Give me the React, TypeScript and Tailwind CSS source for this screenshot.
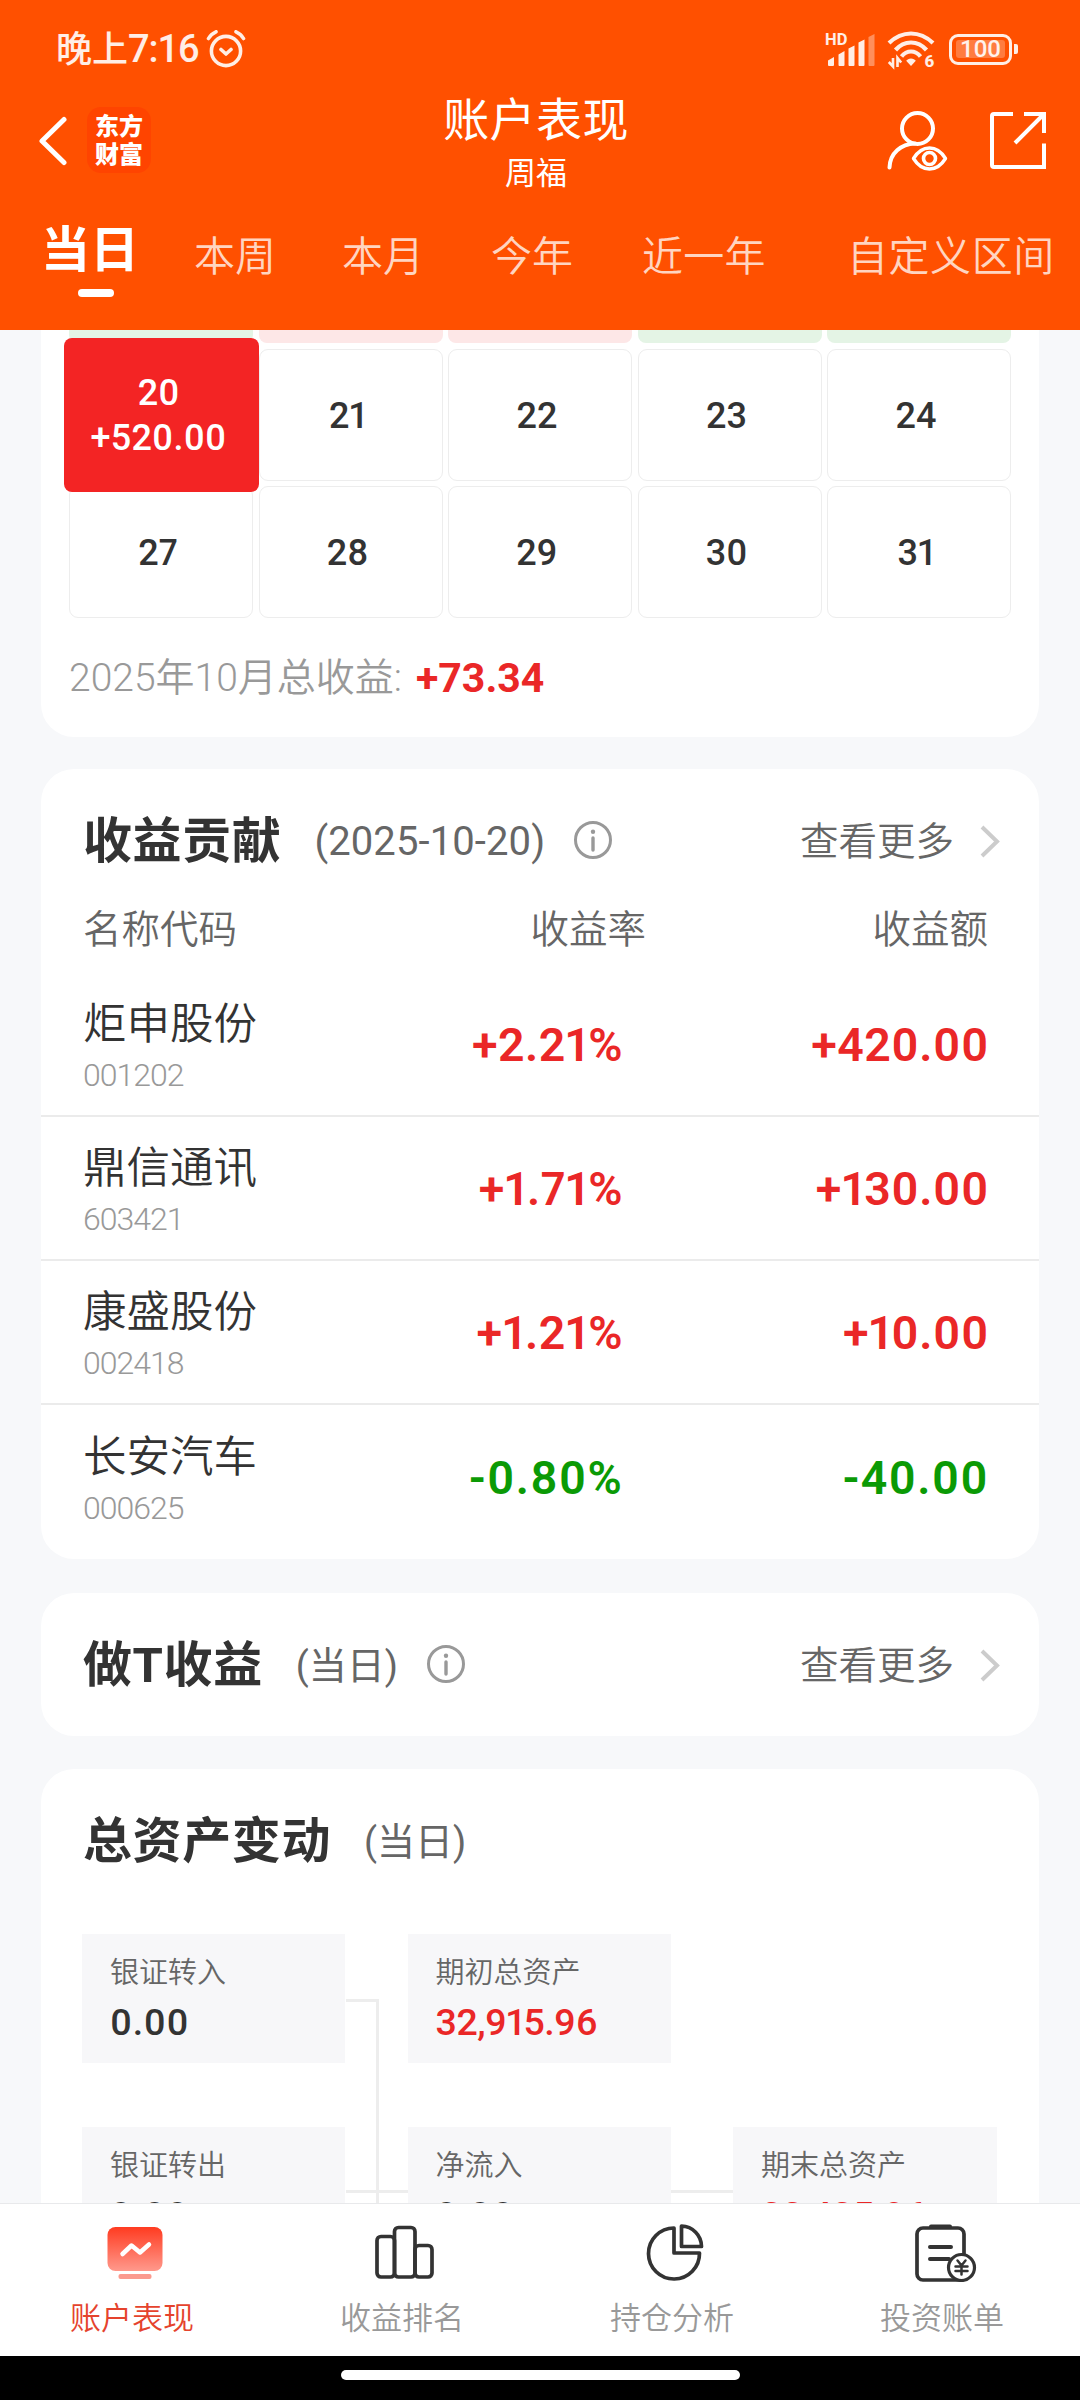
import { ReactNode } from 'react';
import clsx from 'clsx';

interface Holding {
  name: string;
  code: string;
  rate: string;
  amount: string;
}

const tabs = [
  { label: '本周', className: 'ml-[58px]' },
  { label: '本月', className: 'ml-[66px]' },
  { label: '今年', className: 'ml-[67px]' },
  { label: '近一年', className: 'ml-[69px] tracking-[0.3px]' },
  { label: '自定义区间', className: 'ml-[81px] tracking-[0.6px]' },
];

const lastWeek = ['down', 'up', 'up', 'down', 'down'];
const days = [20, 21, 22, 23, 24, 27, 28, 29, 30, 31];

const holdings: Holding[] = [
  { name: '炬申股份', code: '001202', rate: '+2.21%', amount: '+420.00' },
  { name: '鼎信通讯', code: '603421', rate: '+1.71%', amount: '+130.00' },
  { name: '康盛股份', code: '002418', rate: '+1.21%', amount: '+10.00' },
  { name: '长安汽车', code: '000625', rate: '-0.80%', amount: '-40.00' },
];

function StatusBar() {
  return (
    <div className="flex h-[98px] items-center pl-[56px] pr-[62px] text-white/90">
      <span className="text-[36px] font-medium leading-[40px]">
        晚上<span className="text-[38px] tracking-[-1.1px]">7:16</span>
      </span>
      <svg className="ml-[8px] h-[38px] w-[40px]" viewBox="0 1 40 38" fill="none" stroke="currentColor" strokeWidth="3.6" strokeLinecap="round" strokeLinejoin="round">
        <circle cx="20" cy="22" r="14.6" />
        <path d="M2.5 9.5Q5 5 10 2.8M37.5 9.5Q35 5 30 2.8M15 20.5l5 4.5 5-4.5" />
      </svg>
      <div className="ml-auto flex items-center">
        <svg className="h-[36px] w-[52px]" viewBox="0 0 52 36" fill="currentColor">
          <text x="0" y="14" fontSize="16.5" fontWeight="700" fontFamily="Roboto, sans-serif">HD</text>
          <path d="M3 29.5l6-3.5v8a1 1 0 0 1-1 1H4a1 1 0 0 1-1-1zM13.5 23.5l6-3.5v14a1 1 0 0 1-1 1h-4a1 1 0 0 1-1-1zM23.5 17.5l6-3v19.5a1 1 0 0 1-1 1h-4a1 1 0 0 1-1-1zM33.5 11.5l6-3v25.5a1 1 0 0 1-1 1h-4a1 1 0 0 1-1-1z" />
          <path opacity=".4" d="M43.5 6l6-3v31a1 1 0 0 1-1 1h-4a1 1 0 0 1-1-1z" />
        </svg>
        <svg className="ml-[10px] h-[44px] w-[50px]" viewBox="0 -3 50 44" fill="none" stroke="currentColor" strokeWidth="4.2">
          <path d="M2 13Q12 3.5 24 3.5T46 13M8.5 20Q15 12.5 24 12.5T39.5 20M14.5 26.5Q18.5 21.5 24 21.5T33.5 26.5" />
          <path d="M24 28.5c-2 0-4 1-4.8 2.3L24 36l4.8-5.2C28 29.5 26 28.5 24 28.5z" fill="currentColor" stroke="none" />
          <path d="M6 28v8.5L1.8 32M10.5 37v-9l3.7 4.5" strokeWidth="2.6" />
          <text x="37.5" y="37" fontSize="17" fontWeight="800" fill="currentColor" stroke="none" fontFamily="Roboto, sans-serif">6</text>
        </svg>
        <div className="ml-[12px] flex h-[31px] w-[63px] items-center justify-center rounded-[9px] border-[3px] border-current">
          <span className="flex h-[18px] w-[49px] items-center justify-center rounded-[3px] bg-white/25 text-[24px] font-medium leading-none">100</span>
        </div>
        <span className="ml-[2px] h-[10px] w-[4px] rounded-r-[2px] bg-current" />
      </div>
    </div>
  );
}

function TitleBar() {
  return (
    <div className="grid h-[106px] grid-cols-[1fr_auto_1fr] items-start">
      <div className="flex pl-[38px] pt-[9px]">
        <svg className="mt-[9px] h-[50px] w-[30px]" viewBox="0 0 30 50" fill="none" stroke="white" strokeWidth="5" strokeLinecap="round" strokeLinejoin="round">
          <path d="M26 3.5L4 25l22 21.5" />
        </svg>
        <div className="ml-[19px] flex h-[66px] w-[64px] items-center justify-center rounded-[14px] bg-[#ff4400] pt-[2px] text-center text-[24px] font-black leading-[28px] text-white">
          东方
          <br />
          财富
        </div>
      </div>
      <div className="-mt-[2px] pr-[8px] text-center text-white">
        <h1 className="text-[46px] leading-[48px] tracking-[0.4px]">账户表现</h1>
        <p className="mt-[12px] text-[31px] leading-[36px]">周福</p>
      </div>
      <div className="flex items-start justify-end pr-[32px] pt-[12px]">
        <svg className="h-[64px] w-[64px]" viewBox="1 2 64 64" fill="none" stroke="white" strokeWidth="4">
          <circle cx="32.5" cy="20.5" r="15.5" />
          <path d="M4.5 59.5C5 45 16 36 30 35.5" strokeLinecap="round" />
          <path d="M28.5 50.5Q35 40 44.5 40T60.5 50.5Q54 61 44.5 61T28.5 50.5z" strokeWidth="3.4" strokeLinejoin="round" />
          <circle cx="44.5" cy="50.5" r="6" strokeWidth="3.6" />
        </svg>
        <svg className="ml-[38px] h-[60px] w-[60px]" viewBox="0 1 60 60" fill="none" stroke="white" strokeWidth="4">
          <path d="M25 5H6a2 2 0 0 0-2 2v49a2 2 0 0 0 2 2h50V34.5M36 5h20v19M55 6L27 34" />
        </svg>
      </div>
    </div>
  );
}

function PeriodTabs() {
  return (
    <div className="flex h-[126px] items-start pl-[41px] pt-[20px]">
      <div className="flex w-[95px] shrink-0 flex-col items-start whitespace-nowrap">
        <span className="text-[49px] font-bold leading-[54px] text-white">当日</span>
        <span className="ml-[37px] mt-[11px] h-[8px] w-[36px] rounded-full bg-white" />
      </div>
      {tabs.map((t) => (
        <span key={t.label} className={clsx('whitespace-nowrap pt-[6px] text-[41px] font-[350] leading-[54px] text-[#ffd5c1]', t.className)}>
          {t.label}
        </span>
      ))}
    </div>
  );
}

function Calendar() {
  return (
    <section className="h-[407px] shrink-0 rounded-b-[33px] bg-white px-[28px]">
      <div className="grid grid-cols-5 gap-x-[5.5px]">
        {lastWeek.map((d, i) => (
          <div key={i} className={clsx('h-[13px] rounded-b-[8px]', d === 'up' ? 'bg-[#fde7e7]' : 'bg-[#e4f4e5]')} />
        ))}
      </div>
      <div className="mt-[6px] grid grid-cols-5 gap-x-[5.5px] gap-y-[5px]">
        {days.map((d) => (
          <div key={d} className="relative flex h-[132px] items-center justify-center rounded-[9px] border border-[#ededed] pr-[6px] pt-[2px] text-[36px] font-medium text-[#333] proportional-nums">
            {d === 20 ? (
              <div className="absolute -left-[6px] -top-[12px] z-10 flex h-[154px] w-[195px] flex-col items-center justify-center rounded-[8px] bg-[#f32424] pr-[6px] pt-[2px] leading-[45px] text-white">
                <span>20</span>
                <span className="tracking-[0.2px]">+520.00</span>
              </div>
            ) : (
              d
            )}
          </div>
        ))}
      </div>
      <p className="mt-[36px] flex items-center text-[39px] font-[350] leading-[48px] text-[#999]">
        2025年10月总收益:
        <span className="ml-[14px] text-[41px] font-bold text-[#ea2727]">+73.34</span>
      </p>
    </section>
  );
}

function InfoIcon() {
  return (
    <svg className="h-[40px] w-[40px]" viewBox="0 1 40 40" fill="none" stroke="#999" strokeWidth="3">
      <circle cx="20" cy="20" r="17.5" />
      <circle cx="20" cy="11.7" r="2.2" fill="#999" stroke="none" />
      <path d="M20 18v12" strokeLinecap="round" strokeWidth="3.4" />
    </svg>
  );
}

interface CardHeaderProps {
  title: string;
  note: string;
  noteClassName?: string;
  info?: ReactNode;
  more?: boolean;
}

function CardHeader({ title, note, noteClassName = 'text-[38px]', info, more }: CardHeaderProps) {
  return (
    <div className="flex h-[143px] items-center pl-[42px] pr-[38px]">
      <h2 className="pt-[3px] text-[49px] font-bold leading-[60px] tracking-[0.6px] text-[#333]">{title}</h2>
      <span className={clsx('ml-[33px] mr-[28px] pt-[3px] font-[370] leading-[60px] text-[#666]', noteClassName)}>{note}</span>
      {info}
      {more && (
        <div className="ml-auto flex items-center pt-[2px] text-[38.5px] font-[350] leading-[60px] text-[#666]">
          查看更多
          <svg className="-mt-[2px] ml-[25px] h-[34px] w-[22px]" viewBox="0 0 22 34" fill="none" stroke="#ccc" strokeWidth="4">
            <path d="M3 3l15 14.5L3 32" />
          </svg>
        </div>
      )}
    </div>
  );
}

function Contribution() {
  return (
    <section className="h-[790px] rounded-[33px] bg-white">
      <CardHeader title="收益贡献" note="(2025-10-20)" noteClassName="text-[40px] tracking-[0.1px]" info={<InfoIcon />} more />
      <div className="-mt-[7px] flex h-[68px] items-start pl-[42px] pr-[51px] text-[38.5px] font-[350] leading-[50px] text-[#666]">
        <span>名称代码</span>
        <span className="ml-auto">收益率</span>
        <span className="w-[342px] text-right">收益额</span>
      </div>
      {holdings.map((h) => {
        const color = h.amount.startsWith('-') ? 'text-[#0b9a05] tracking-[1.2px]' : 'text-[#ea2727] tracking-[0.5px]';
        return (
          <div key={h.code} className="flex h-[144px] items-center border-b-2 border-[#ebebeb] pl-[42px] pr-[50px] last:border-0">
            <div className="mt-[10px] w-[240px]">
              <div className="text-[43.5px] font-[350] leading-[52px] text-[#333]">{h.name}</div>
              <div className="text-[32px] font-[350] leading-[48px] tracking-[-1px] text-[#999]">{h.code}</div>
            </div>
            <div className={clsx('w-[300px] pt-[3px] text-right text-[46.5px] font-semibold proportional-nums', color)}>{h.rate}</div>
            <div className={clsx('ml-auto pt-[3px] text-[46.5px] font-semibold proportional-nums', color)}>{h.amount}</div>
          </div>
        );
      })}
    </section>
  );
}

function AssetBox({ label, value, red }: { label: string; value: string; red?: boolean }) {
  return (
    <div className="h-[129px] bg-[#f7f7f9] pl-[28px] pt-[17px]">
      <div className="text-[29px] font-[350] leading-[44px] text-[#666]">{label}</div>
      <div className={clsx('mt-[3px] text-[37.5px] font-medium leading-[48px] proportional-nums', red ? 'tracking-[-0.4px] text-[#ea2727]' : 'tracking-[0.7px] text-[#333]')}>{value}</div>
    </div>
  );
}

function AssetChange() {
  return (
    <section className="rounded-t-[33px] bg-white">
      <CardHeader title="总资产变动" note="(当日)" />
      <div className="relative mt-[22px] px-[41px]">
        {/* connector lines between the boxes */}
        <div className="absolute left-[305px] top-[65px] h-[260px] w-[33px] border-r-[3px] border-t-[3px] border-[#ededed]" />
        <div className="absolute left-[305px] top-[256px] h-[3px] w-[400px] bg-[#ededed]" />
        <div className="relative grid grid-cols-[263px_263px_264px] gap-x-[62.5px] gap-y-[64px]">
          <AssetBox label="银证转入" value="0.00" />
          <AssetBox label="期初总资产" value="32,915.96" red />
          <span />
          <AssetBox label="银证转出" value="0.00" />
          <AssetBox label="净流入" value="0.00" />
          <AssetBox label="期末总资产" value="33,435.96" red />
        </div>
      </div>
    </section>
  );
}

function PerformanceIcon() {
  return (
    <svg className="h-[60px] w-[64px]" viewBox="0 0 64 60" fill="none">
      <defs>
        <linearGradient id="perf" x1="0" y1="0" x2="0" y2="1">
          <stop offset="0" stopColor="#ff3b20" />
          <stop offset="1" stopColor="#ff998c" />
        </linearGradient>
      </defs>
      <rect x="4.5" y="5" width="55" height="44" rx="8" fill="url(#perf)" />
      <rect x="15.5" y="52" width="33" height="5" rx="2" fill="#fb9a8e" />
      <path d="M19.5 32l9-8.5 8.5 7 9-8" stroke="white" strokeWidth="4.5" strokeLinecap="round" strokeLinejoin="round" />
    </svg>
  );
}

function RankIcon() {
  return (
    <svg className="h-[60px] w-[64px]" viewBox="0 0 64 60" fill="none" stroke="#333" strokeWidth="3.7">
      <rect x="4" y="14.5" width="17.5" height="40.5" rx="4" />
      <rect x="21.5" y="5.5" width="20.5" height="49.5" rx="4" />
      <rect x="42" y="23.5" width="17" height="31.5" rx="4" />
    </svg>
  );
}

function PositionIcon() {
  return (
    <svg className="h-[60px] w-[64px]" viewBox="0 0 64 60" fill="none" stroke="#333" strokeWidth="3.7" strokeLinejoin="round">
      <path d="M31 6A25.5 25.5 0 1 0 56.5 31H31z" />
      <path d="M38.5 4A20.5 20.5 0 0 1 58.5 24.5h-20z" />
    </svg>
  );
}

function BillIcon() {
  return (
    <svg className="h-[60px] w-[64px]" viewBox="0 0 64 60" fill="none" stroke="#333" strokeWidth="3.7" strokeLinecap="round">
      <path d="M51 32V12a6 6 0 0 0-6-6H10a6 6 0 0 0-6 6v40a6 6 0 0 0 6 6h37" />
      <path d="M18 4.5h19" strokeWidth="4" />
      <path d="M17 25h21M17 37h19" strokeWidth="4" />
      <circle cx="48.5" cy="45.5" r="13" fill="white" strokeWidth="3.2" />
      <path d="M44.5 38.5l4 5 4-5M48.5 43.5v9M42.5 44.5h12M42.5 49h12" strokeWidth="2.5" />
    </svg>
  );
}

function BottomNav() {
  const items = [
    { label: '账户表现', icon: <PerformanceIcon />, active: true },
    { label: '收益排名', icon: <RankIcon /> },
    { label: '持仓分析', icon: <PositionIcon /> },
    { label: '投资账单', icon: <BillIcon /> },
  ];
  return (
    <nav className="grid h-[153px] shrink-0 grid-cols-4 border-t border-[#e8e9eb] bg-white">
      {items.map((it) => (
        <div key={it.label} className="flex flex-col items-center pt-[18px]">
          {it.icon}
          <span className={clsx('mr-[6px] mt-[17px] text-[31px] font-[350] leading-[40px]', it.active ? 'text-[#e5432d]' : 'text-[#999]')}>{it.label}</span>
        </div>
      ))}
    </nav>
  );
}

export default function App() {
  return (
    <div className="flex h-[2400px] w-[1080px] flex-col overflow-hidden bg-[#f7f8fa] font-[Roboto,'Noto_Sans_CJK_SC',sans-serif]">
      <header className="h-[330px] shrink-0 bg-[#ff5000]">
        <StatusBar />
        <TitleBar />
        <PeriodTabs />
      </header>
      <main className="flex h-[1873px] shrink-0 flex-col overflow-hidden px-[41px]">
        <Calendar />
        <div className="mt-[32px] shrink-0">
          <Contribution />
        </div>
        <section className="mt-[34px] shrink-0 rounded-[33px] bg-white">
          <CardHeader title="做T收益" note="(当日)" info={<InfoIcon />} more />
        </section>
        <div className="mt-[33px] shrink-0">
          <AssetChange />
        </div>
      </main>
      <BottomNav />
      <div className="flex h-[44px] shrink-0 justify-center bg-black pt-[14px]">
        <span className="h-[10px] w-[399px] rounded-full bg-white" />
      </div>
    </div>
  );
}
